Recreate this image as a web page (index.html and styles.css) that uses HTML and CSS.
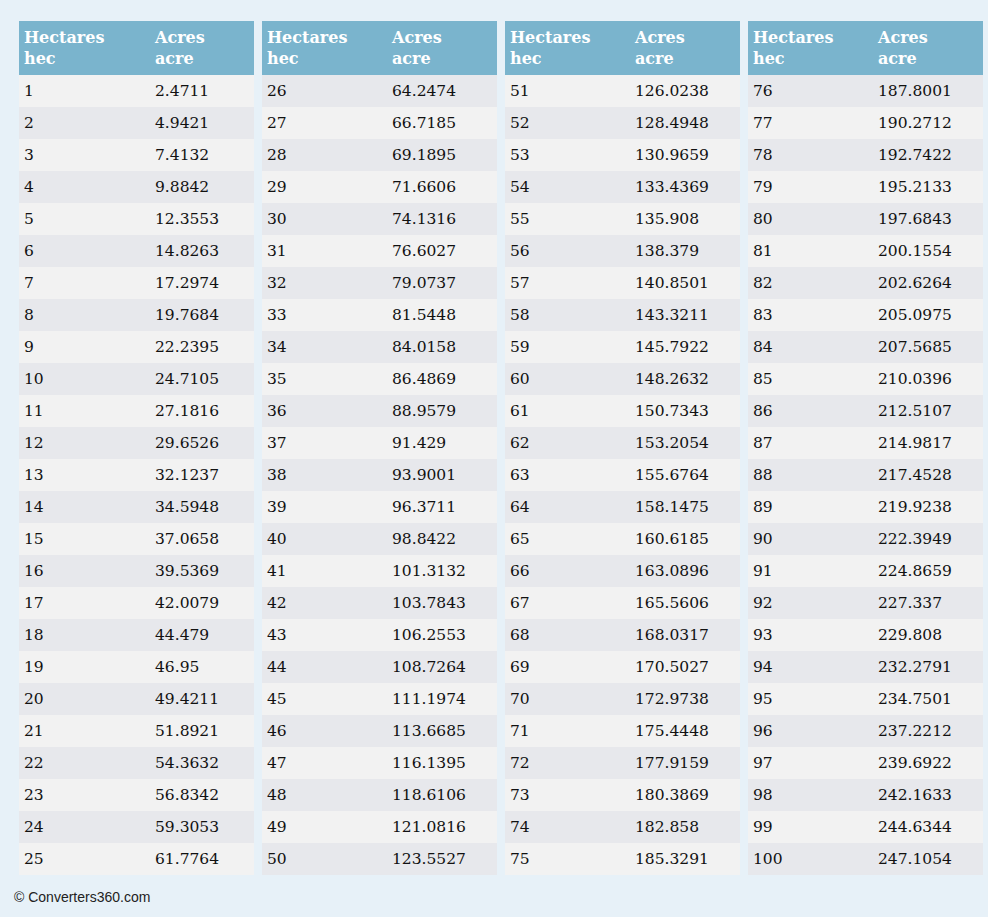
FILE: index.html
```html
<!DOCTYPE html>
<html lang="en">
<head>
<meta charset="utf-8">
<title>Hectares to Acres</title>
<link rel="stylesheet" href="styles.css">
</head>
<body>
<div class="page">
  <div class="tables">
    <div class="tbl tbl--first">
      <div class="hd"><span>Hectares<br>hec</span><span>Acres<br>acre</span></div>
      <div class="row"><span>1</span><span>2.4711</span></div>
      <div class="row"><span>2</span><span>4.9421</span></div>
      <div class="row"><span>3</span><span>7.4132</span></div>
      <div class="row"><span>4</span><span>9.8842</span></div>
      <div class="row"><span>5</span><span>12.3553</span></div>
      <div class="row"><span>6</span><span>14.8263</span></div>
      <div class="row"><span>7</span><span>17.2974</span></div>
      <div class="row"><span>8</span><span>19.7684</span></div>
      <div class="row"><span>9</span><span>22.2395</span></div>
      <div class="row"><span>10</span><span>24.7105</span></div>
      <div class="row"><span>11</span><span>27.1816</span></div>
      <div class="row"><span>12</span><span>29.6526</span></div>
      <div class="row"><span>13</span><span>32.1237</span></div>
      <div class="row"><span>14</span><span>34.5948</span></div>
      <div class="row"><span>15</span><span>37.0658</span></div>
      <div class="row"><span>16</span><span>39.5369</span></div>
      <div class="row"><span>17</span><span>42.0079</span></div>
      <div class="row"><span>18</span><span>44.479</span></div>
      <div class="row"><span>19</span><span>46.95</span></div>
      <div class="row"><span>20</span><span>49.4211</span></div>
      <div class="row"><span>21</span><span>51.8921</span></div>
      <div class="row"><span>22</span><span>54.3632</span></div>
      <div class="row"><span>23</span><span>56.8342</span></div>
      <div class="row"><span>24</span><span>59.3053</span></div>
      <div class="row"><span>25</span><span>61.7764</span></div>
    </div>
    <div class="tbl tbl--flip">
      <div class="hd"><span>Hectares<br>hec</span><span>Acres<br>acre</span></div>
      <div class="row"><span>26</span><span>64.2474</span></div>
      <div class="row"><span>27</span><span>66.7185</span></div>
      <div class="row"><span>28</span><span>69.1895</span></div>
      <div class="row"><span>29</span><span>71.6606</span></div>
      <div class="row"><span>30</span><span>74.1316</span></div>
      <div class="row"><span>31</span><span>76.6027</span></div>
      <div class="row"><span>32</span><span>79.0737</span></div>
      <div class="row"><span>33</span><span>81.5448</span></div>
      <div class="row"><span>34</span><span>84.0158</span></div>
      <div class="row"><span>35</span><span>86.4869</span></div>
      <div class="row"><span>36</span><span>88.9579</span></div>
      <div class="row"><span>37</span><span>91.429</span></div>
      <div class="row"><span>38</span><span>93.9001</span></div>
      <div class="row"><span>39</span><span>96.3711</span></div>
      <div class="row"><span>40</span><span>98.8422</span></div>
      <div class="row"><span>41</span><span>101.3132</span></div>
      <div class="row"><span>42</span><span>103.7843</span></div>
      <div class="row"><span>43</span><span>106.2553</span></div>
      <div class="row"><span>44</span><span>108.7264</span></div>
      <div class="row"><span>45</span><span>111.1974</span></div>
      <div class="row"><span>46</span><span>113.6685</span></div>
      <div class="row"><span>47</span><span>116.1395</span></div>
      <div class="row"><span>48</span><span>118.6106</span></div>
      <div class="row"><span>49</span><span>121.0816</span></div>
      <div class="row"><span>50</span><span>123.5527</span></div>
    </div>
    <div class="tbl">
      <div class="hd"><span>Hectares<br>hec</span><span>Acres<br>acre</span></div>
      <div class="row"><span>51</span><span>126.0238</span></div>
      <div class="row"><span>52</span><span>128.4948</span></div>
      <div class="row"><span>53</span><span>130.9659</span></div>
      <div class="row"><span>54</span><span>133.4369</span></div>
      <div class="row"><span>55</span><span>135.908</span></div>
      <div class="row"><span>56</span><span>138.379</span></div>
      <div class="row"><span>57</span><span>140.8501</span></div>
      <div class="row"><span>58</span><span>143.3211</span></div>
      <div class="row"><span>59</span><span>145.7922</span></div>
      <div class="row"><span>60</span><span>148.2632</span></div>
      <div class="row"><span>61</span><span>150.7343</span></div>
      <div class="row"><span>62</span><span>153.2054</span></div>
      <div class="row"><span>63</span><span>155.6764</span></div>
      <div class="row"><span>64</span><span>158.1475</span></div>
      <div class="row"><span>65</span><span>160.6185</span></div>
      <div class="row"><span>66</span><span>163.0896</span></div>
      <div class="row"><span>67</span><span>165.5606</span></div>
      <div class="row"><span>68</span><span>168.0317</span></div>
      <div class="row"><span>69</span><span>170.5027</span></div>
      <div class="row"><span>70</span><span>172.9738</span></div>
      <div class="row"><span>71</span><span>175.4448</span></div>
      <div class="row"><span>72</span><span>177.9159</span></div>
      <div class="row"><span>73</span><span>180.3869</span></div>
      <div class="row"><span>74</span><span>182.858</span></div>
      <div class="row"><span>75</span><span>185.3291</span></div>
    </div>
    <div class="tbl tbl--flip">
      <div class="hd"><span>Hectares<br>hec</span><span>Acres<br>acre</span></div>
      <div class="row"><span>76</span><span>187.8001</span></div>
      <div class="row"><span>77</span><span>190.2712</span></div>
      <div class="row"><span>78</span><span>192.7422</span></div>
      <div class="row"><span>79</span><span>195.2133</span></div>
      <div class="row"><span>80</span><span>197.6843</span></div>
      <div class="row"><span>81</span><span>200.1554</span></div>
      <div class="row"><span>82</span><span>202.6264</span></div>
      <div class="row"><span>83</span><span>205.0975</span></div>
      <div class="row"><span>84</span><span>207.5685</span></div>
      <div class="row"><span>85</span><span>210.0396</span></div>
      <div class="row"><span>86</span><span>212.5107</span></div>
      <div class="row"><span>87</span><span>214.9817</span></div>
      <div class="row"><span>88</span><span>217.4528</span></div>
      <div class="row"><span>89</span><span>219.9238</span></div>
      <div class="row"><span>90</span><span>222.3949</span></div>
      <div class="row"><span>91</span><span>224.8659</span></div>
      <div class="row"><span>92</span><span>227.337</span></div>
      <div class="row"><span>93</span><span>229.808</span></div>
      <div class="row"><span>94</span><span>232.2791</span></div>
      <div class="row"><span>95</span><span>234.7501</span></div>
      <div class="row"><span>96</span><span>237.2212</span></div>
      <div class="row"><span>97</span><span>239.6922</span></div>
      <div class="row"><span>98</span><span>242.1633</span></div>
      <div class="row"><span>99</span><span>244.6344</span></div>
      <div class="row"><span>100</span><span>247.1054</span></div>
    </div>
  </div>
  <div class="footer">© Converters360.com</div>
</div>
</body>
</html>
```

FILE: styles.css
```css
html, body {
  margin: 0;
  padding: 0;
  background: #e7f1f8;
}
.page {
  width: 988px;
  height: 917px;
  box-sizing: border-box;
  padding: 21px 5px 0 19px;
  font-family: "DejaVu Serif", "Liberation Serif", serif;
  color: #111;
}
.tables {
  display: flex;
  gap: 8px;
}
.tbl {
  width: 235px;
  display: flex;
  flex-direction: column;
}
.hd, .row {
  display: grid;
  grid-template-columns: 125px 1fr;
}
.tbl--first .hd, .tbl--first .row {
  grid-template-columns: 131px 1fr;
}
.hd {
  background: #7ab4cd;
  color: #fff;
  font-weight: bold;
  font-size: 16px;
  line-height: 21px;
  padding: 6px 0;
}
.hd span, .row span {
  padding-left: 5px;
}
.row {
  height: 32px;
  font-size: 15.5px;
  line-height: 33px;
  background: #f2f2f2;
}
.row:nth-child(odd) {
  background: #e7e8ec;
}
.tbl--flip .row {
  background: #e7e8ec;
}
.tbl--flip .row:nth-child(odd) {
  background: #f2f2f2;
}
.footer {
  margin-top: 14px;
  margin-left: -5px;
  font-family: "Liberation Sans", Arial, sans-serif;
  font-size: 14px;
  line-height: 16px;
  color: #222;
}
```
